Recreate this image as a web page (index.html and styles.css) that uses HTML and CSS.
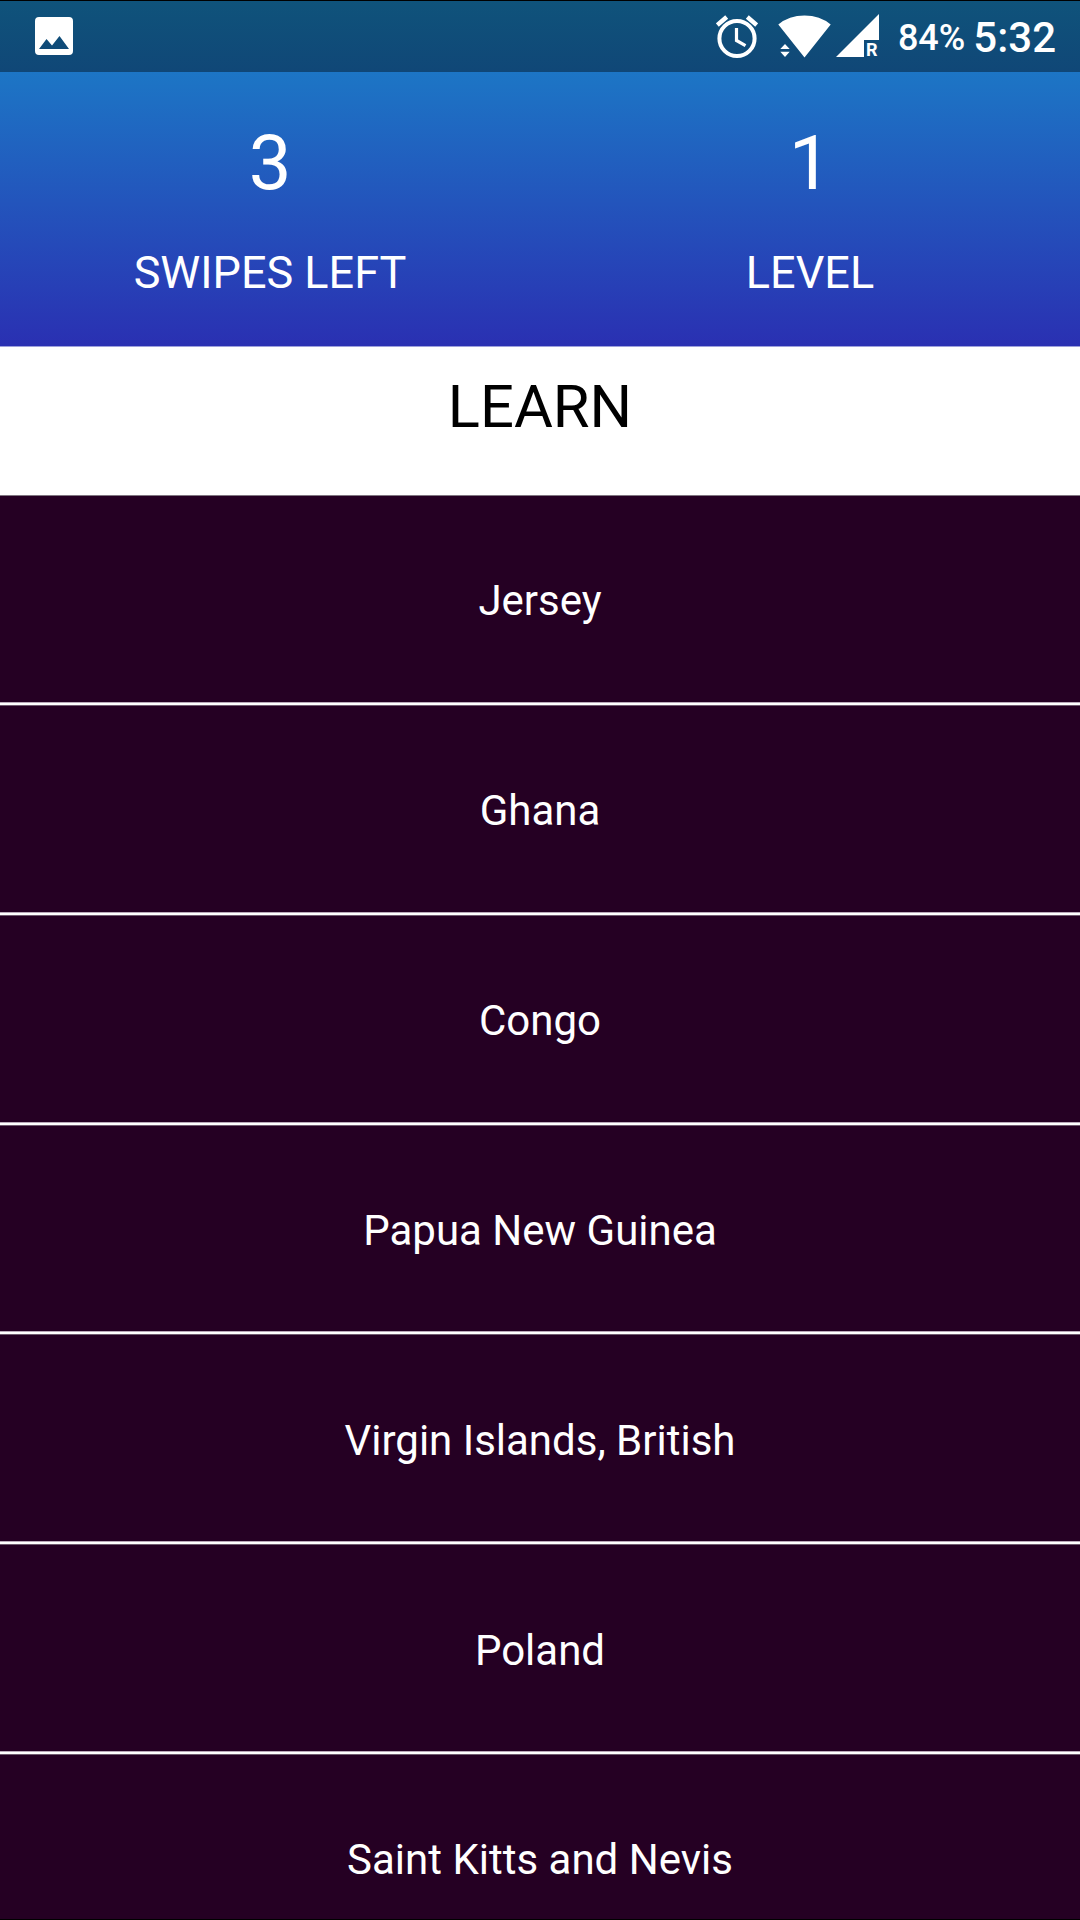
FILE: index.html
```html
<!DOCTYPE html>
<html lang="en">
<head>
<meta charset="utf-8">
<title>Learn</title>
<link rel="stylesheet" href="styles.css">
</head>
<body>
<div class="screen">
  <header class="header">
    <div class="status">
      <svg class="icon-picture" viewBox="0 0 38 38"><path fill="#fff" fill-rule="evenodd" d="M4 0H34Q38 0 38 4V34Q38 38 34 38H4Q0 38 0 34V4Q0 0 4 0ZM4 32H34L24.500 19L17 28.500L11.500 22Z"/></svg>
      <div class="tray">
        <svg class="icon-alarm" viewBox="0 0 42 44"><g fill="none" stroke="#fff"><circle cx="21" cy="23.500" r="17.600" stroke-width="4"/><path stroke-width="3.200" d="M20.500 13V25.500L29.500 30.700"/><path stroke-width="4.500" d="M1.300 10L10.700 2M31.300 2L40.700 10"/></g></svg>
        <svg class="icon-wifi" viewBox="0 0 53 43"><path fill="#fff" d="M.3 9.500Q11 .5 26.500 .5T52.700 9.500L26.500 42.500ZM2.300 34L7 29L11.700 34ZM2.300 36.700H11.700L7 42Z"/></svg>
        <div class="signal">
          <svg class="icon-signal" viewBox="0 0 43 43"><path fill="#fff" d="M0 43L43 0V26H28V43Z"/></svg>
          <span class="roaming">R</span>
        </div>
        <span class="battery">84%</span>
        <span class="clock">5:32</span>
      </div>
    </div>
    <div class="stats">
      <div class="stat"><span class="value">3</span><span class="label">SWIPES LEFT</span></div>
      <div class="stat"><span class="value">1</span><span class="label">LEVEL</span></div>
    </div>
  </header>
  <h1 class="title">LEARN</h1>
  <ul class="list">
    <li class="row">Jersey</li>
    <li class="row">Ghana</li>
    <li class="row">Congo</li>
    <li class="row">Papua New Guinea</li>
    <li class="row">Virgin Islands, British</li>
    <li class="row">Poland</li>
    <li class="row">Saint Kitts and Nevis</li>
  </ul>
</div>
</body>
</html>
```

FILE: styles.css
```css
* { box-sizing: border-box; }
body { margin: 0; background: #250023; font-family: Roboto, sans-serif; color: #fff; }
.screen { height: 1920px; overflow: hidden; display: flex; flex-direction: column; border-bottom: 1px solid #000; }
.header { height: 346px; flex: none; background: linear-gradient(#1988ca, #2a30b2); }
.status { height: 72px; padding: 1px 24px 0 35px; display: flex; align-items: flex-start; justify-content: space-between; background: linear-gradient(#0f537b, #104777); border-top: 1px solid #000; }
.icon-picture { width: 38px; height: 38px; margin-top: 15px; }
.tray { display: flex; }
.icon-alarm { width: 42px; height: 44px; margin: 13px 20px 0 0; }
.icon-wifi { width: 53px; height: 43px; margin: 13px 5px 0 0; }
.signal { position: relative; margin: 12px 19px 0 0; }
.icon-signal { display: block; width: 43px; height: 43px; }
.roaming { position: absolute; left: 30px; top: 25px; font-size: 18px; line-height: 22px; font-weight: 700; }
.battery { font-size: 36px; font-weight: 500; line-height: 42px; margin: 15px 8px 0 0; }
.clock { font-size: 42px; font-weight: 500; line-height: 50px; margin-top: 11px; }
.stats { display: grid; grid-template-columns: 1fr 1fr; }
.stat { display: flex; flex-direction: column; align-items: center; padding-top: 46px; }
.value { font-size: 76px; line-height: 90px; }
.label { font-size: 45px; line-height: 54px; margin-top: 38px; }
.title { margin: 0; height: 150px; flex: none; background: #fff; color: #000; border-top: 1px solid #9da0dc; border-bottom: 1px solid #7f7580; text-align: center; font-size: 59.700px; font-weight: 400; line-height: 70px; padding-top: 25px; }
.list { margin: 0; padding: 0; list-style: none; }
.row { height: 209.850px; display: flex; align-items: center; justify-content: center; background: linear-gradient(#b9a9b9 25%, #fff 25% 75%, #6f5a6e 75%) bottom / 100% 4px no-repeat #250023; font-size: 42px; }
```
